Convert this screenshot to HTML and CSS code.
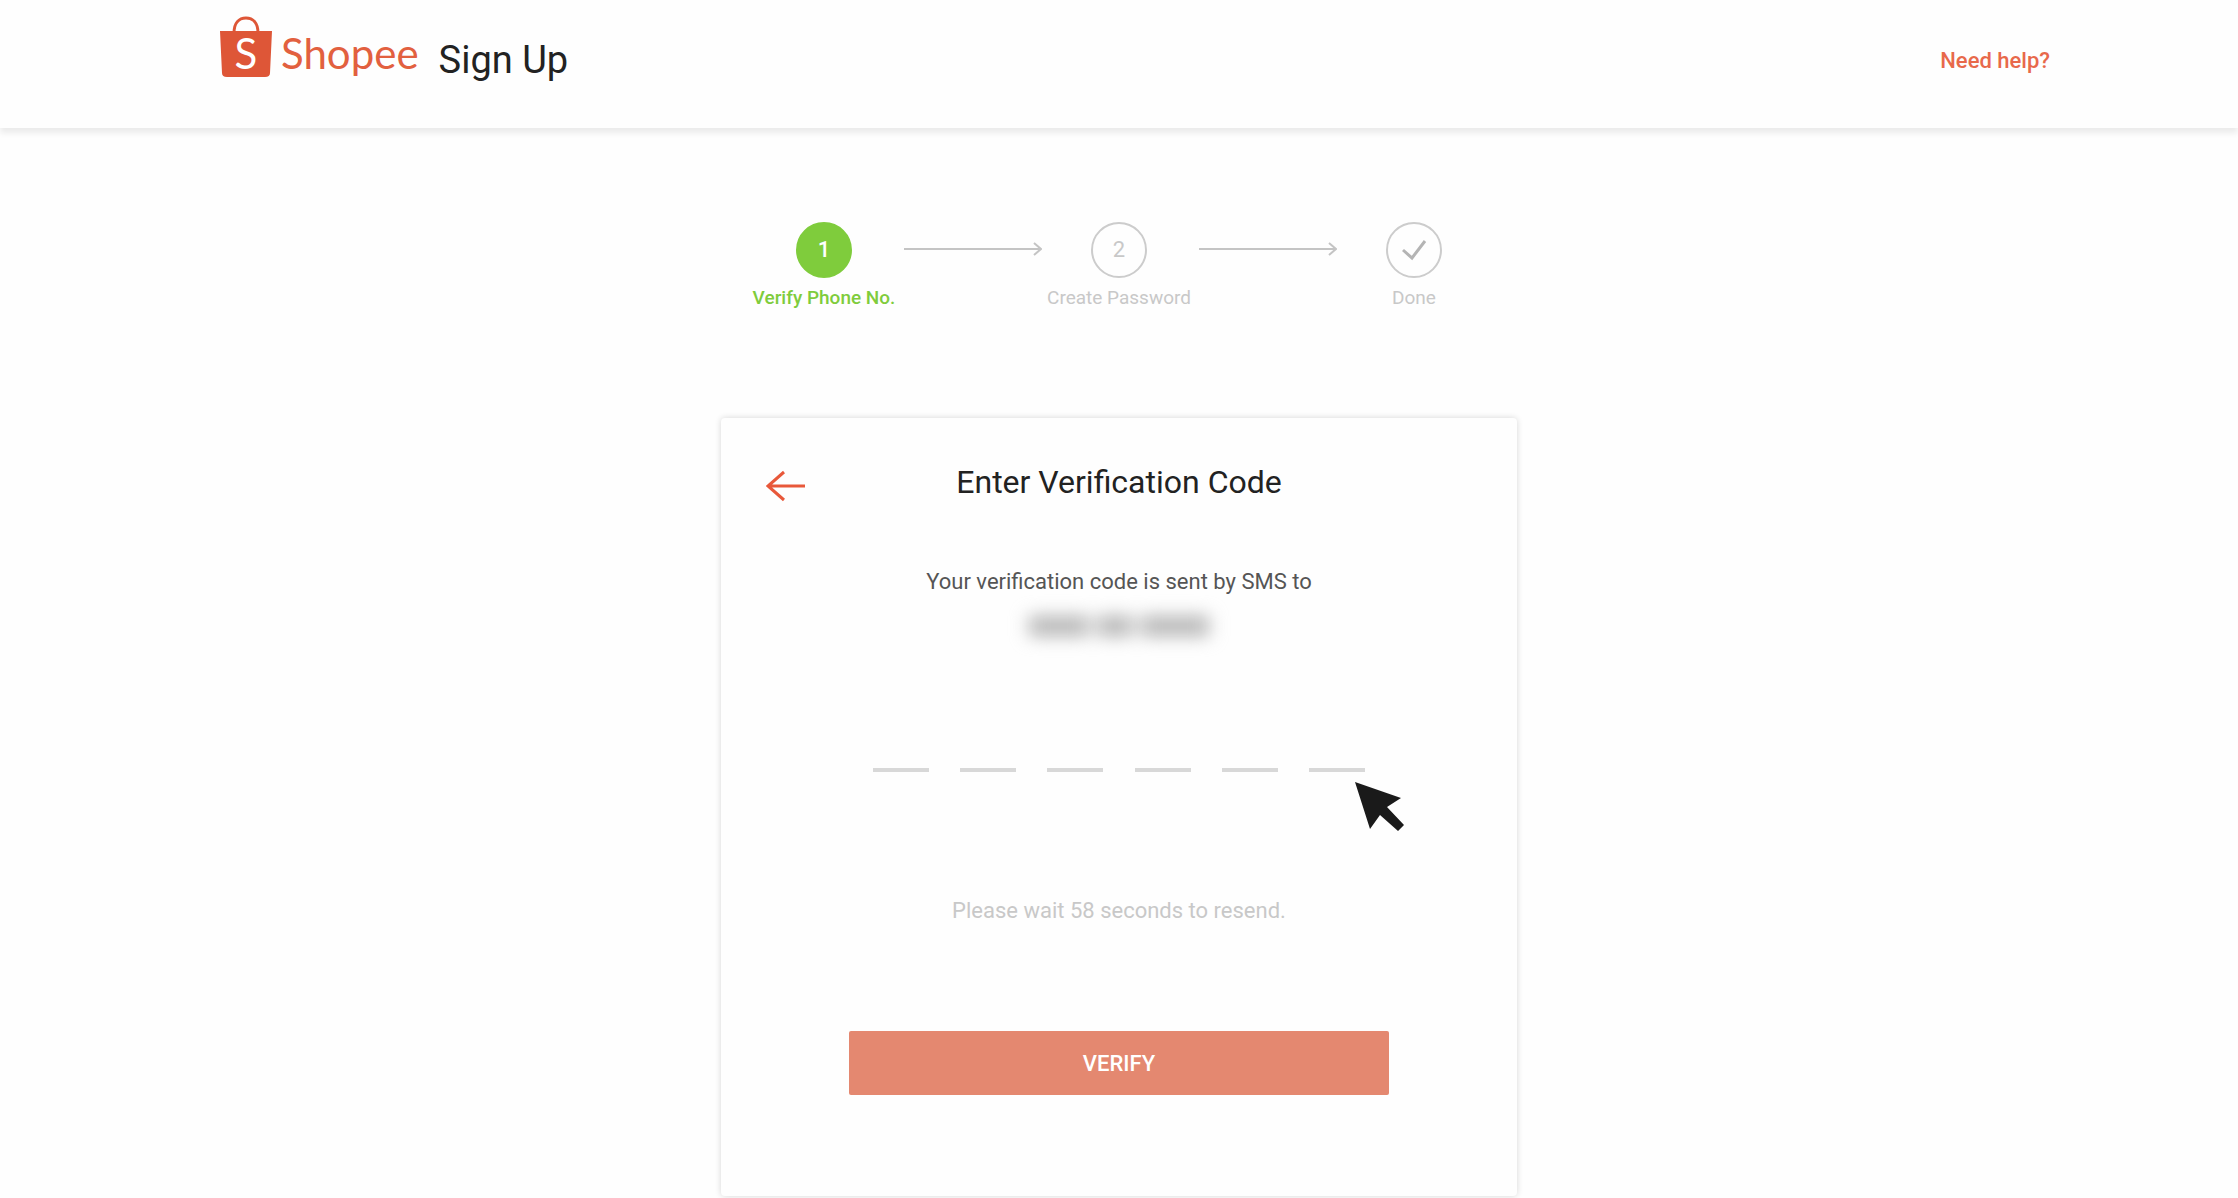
FILE: index.html
```html
<!DOCTYPE html>
<html lang="en">
	<head>
		<meta charset="utf-8">
		<title>Shopee - Sign Up</title>
		<link rel="stylesheet" href="styles.css">
	</head>
	<body>
		<header class="header">
			<a class="logo" href="#">
				<svg class="bag" width="54" height="62" viewBox="0 0 54 62" aria-hidden="true">
					<path class="handle" d="M15 17 C15 7 20 2 27 2 C34 2 39 7 39 17"></path>
					<path class="sack" d="M1 15 H53 L51 57 Q51 61 46 61 H8 Q3 61 3 57 Z"></path>
					<text class="bag-letter" x="27" y="53" text-anchor="middle">S</text>
				</svg>
				<span class="brand">Shopee</span>
			</a>
			<h1 class="page-name">Sign Up</h1>
			<a class="help" href="#">Need help?</a>
		</header>

		<main>
			<ol class="steps">
				<li class="step active">
					<span class="dot">1</span>
					<span>Verify Phone No.</span>
				</li>
				<li class="arrow" aria-hidden="true">
					<svg width="140" height="14" viewBox="0 0 140 14">
						<path d="M2 7 H139 M132 1 L139 7 L132 13"></path>
					</svg>
				</li>
				<li class="step">
					<span class="dot">2</span>
					<span>Create Password</span>
				</li>
				<li class="arrow" aria-hidden="true">
					<svg width="140" height="14" viewBox="0 0 140 14">
						<path d="M2 7 H139 M132 1 L139 7 L132 13"></path>
					</svg>
				</li>
				<li class="step">
					<span class="dot">
						<svg class="check" width="26" height="22" viewBox="0 0 26 22">
							<path d="M2 11 L11 19 L24 2"></path>
						</svg>
					</span>
					<span>Done</span>
				</li>
			</ol>

			<form class="card">
				<div class="card-head">
					<button class="back" type="button" aria-label="Back">
						<svg width="40" height="32" viewBox="0 0 40 32">
							<path d="M39 16 H2 M18 2 L2 16 L18 30"></path>
						</svg>
					</button>
					<h2>Enter Verification Code</h2>
				</div>
				<p class="sent">Your verification code is sent by SMS to</p>
				<div class="phone"><i></i><i></i><i></i></div>
				<div class="code">
					<input type="text" maxlength="1" aria-label="Digit 1">
					<input type="text" maxlength="1" aria-label="Digit 2">
					<input type="text" maxlength="1" aria-label="Digit 3">
					<input type="text" maxlength="1" aria-label="Digit 4">
					<input type="text" maxlength="1" aria-label="Digit 5">
					<input type="text" maxlength="1" aria-label="Digit 6">
					<svg class="pointer" width="50" height="50" viewBox="0 0 50 50" aria-hidden="true">
						<path d="M0 0 L46 16 L32 25 L49 43 L43 49 L25 33 L15 47 Z"></path>
					</svg>
				</div>
				<p class="resend">Please wait 58 seconds to resend.</p>
				<button class="verify" type="submit">VERIFY</button>
			</form>
		</main>
	</body>
</html>
```
FILE: styles.css
```css
* {
	box-sizing: border-box;
}

body {
	margin: 0;
	background-color: #fefefe;
	color: #222;
	font-family: Roboto, "Liberation Sans", sans-serif;
	font-size: 19px;
}

h1, h2, p, ol {
	margin: 0;
	padding: 0;
	font-weight: 400;
}

a {
	text-decoration: none;
}

button {
	border: 0;
	padding: 0;
	font-family: inherit;
	cursor: pointer;
}

svg {
	display: block;
}

/* header */
.header {
	display: flex;
	align-items: center;
	height: 128px;
	padding: 0 188px 16px 219px;
	background-color: #fefefe;
	box-shadow: 0 5px 6px rgba(0, 0, 0, .08);
}

.logo {
	display: flex;
	align-items: center;
	gap: 8px;
	padding-bottom: 18px;
}

.handle {
	fill: none;
	stroke: #de5637;
	stroke-width: 3;
}

.sack {
	fill: #de5637;
}

.bag-letter {
	fill: #fff;
	font-family: Lato, sans-serif;
	font-size: 42px;
}

.brand {
	color: #e2603f;
	font-family: Lato, sans-serif;
	font-size: 42px;
	line-height: 48px;
	padding-top: 12px;
}

.page-name {
	margin-left: 20px;
	font-size: 38px;
	line-height: 44px;
	padding-top: 8px;
}

.help {
	margin-left: auto;
	padding-top: 8px;
	color: #e8694b;
	font-size: 22px;
	font-weight: 500;
}

/* progress */
.steps {
	display: flex;
	justify-content: center;
	margin-top: 94px;
	list-style: none;
	color: #c8c8c8;
}

.step {
	display: flex;
	flex-direction: column;
	align-items: center;
	gap: 8px;
	width: 155px;
	line-height: 24px;
	white-space: nowrap;
}

.dot {
	display: flex;
	align-items: center;
	justify-content: center;
	width: 56px;
	height: 56px;
	border: 2px solid #ccc;
	border-radius: 50%;
	font-size: 22px;
}

.active {
	color: #7fcc3c;
	font-weight: 500;
}

.active .dot {
	border-color: #7fcc3c;
	background-color: #7fcc3c;
	color: #fff;
}

.arrow {
	padding-top: 20px;
}

.arrow path {
	fill: none;
	stroke: #c4c4c4;
	stroke-width: 2;
}

.check path {
	fill: none;
	stroke: #b4b4b4;
	stroke-width: 3;
}

/* verification card */
.card {
	max-width: 796px;
	margin: 108px auto 2px;
	padding: 40px 128px 101px;
	border-radius: 4px;
	background-color: #fefefe;
	box-shadow: 0 0 6px rgba(0, 0, 0, .16);
	text-align: center;
}

.card-head {
	position: relative;
}

.card-head h2 {
	font-size: 32px;
	line-height: 48px;
}

.back {
	position: absolute;
	left: -83px;
	top: 12px;
	background: none;
}

.back path {
	fill: none;
	stroke: #e8583a;
	stroke-width: 3;
}

.sent {
	margin-top: 62px;
	color: #555;
	font-size: 22px;
	line-height: 28px;
}

/* masked phone number */
.phone {
	display: flex;
	justify-content: center;
	gap: 8px;
	margin-top: 20px;
	filter: blur(9px);
}

.phone i {
	width: 60px;
	height: 20px;
	background-color: #b4b4b4;
}

.phone i:nth-child(2) {
	width: 36px;
}

.phone i:nth-child(3) {
	width: 68px;
}

.code {
	position: relative;
	display: flex;
	justify-content: space-between;
	margin: 84px 24px 0;
}

.code input {
	width: 56px;
	height: 52px;
	padding: 0;
	border: 0;
	border-bottom: 4px solid #d8d8d8;
	background: none;
	font-size: 32px;
	text-align: center;
	outline: none;
}

.pointer {
	position: absolute;
	left: 100%;
	top: 100%;
	margin: 10px 0 0 -10px;
	fill: #1a1a1a;
}

.resend {
	margin-top: 125px;
	color: #c8c8c8;
	font-size: 22px;
	line-height: 28px;
}

.verify {
	display: block;
	width: 100%;
	height: 64px;
	margin-top: 106px;
	border-radius: 2px;
	background-color: #e48870;
	color: #fff;
	font-size: 22px;
	font-weight: 500;
}
```
